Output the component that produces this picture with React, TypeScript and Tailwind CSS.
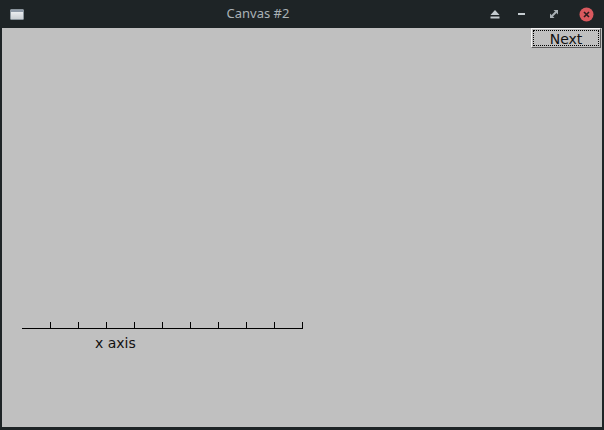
export default function App() {
    const ticks = [0, 28, 56, 84, 112, 140, 168, 196, 224, 252, 280]

    return (
        <div className="w-[604px] h-[430px] bg-[#1e2426] flex flex-col overflow-hidden">
            {/* title bar */}
            <div className="h-[28px] relative flex items-center shrink-0">
                <div className="ml-[10px] w-[14px] h-[11px] rounded-[1px] bg-gradient-to-b from-[#f4f6f8] to-[#c9ced3] border border-[#8a949c] relative">
                    <div className="h-[2px] bg-[#8f9aa8]" />
                </div>
                <div className="absolute left-0 right-0 top-0 h-[28px] flex items-center justify-center pointer-events-none">
                    <span
                        className="text-[13px] text-[#aab2b7] ml-[-88px]"
                        style={{ fontFamily: '"Noto Sans", "DejaVu Sans", sans-serif' }}
                    >
                        Canvas #2
                    </span>
                </div>
                <div className="ml-auto flex items-center h-full">
                    <svg width="12" height="12" viewBox="0 0 12 12" className="mr-[16px]">
                        <path d="M6 2 L10.5 7 L1.5 7 Z" fill="#c5ccd0" />
                        <rect x="1.5" y="8.5" width="9" height="2" fill="#c5ccd0" />
                    </svg>
                    <svg width="10" height="12" viewBox="0 0 10 12" className="mr-[22px]">
                        <rect x="1" y="5" width="7" height="2" fill="#c5ccd0" />
                    </svg>
                    <svg width="10" height="10" viewBox="0 0 10 10" className="mr-[20px]">
                        <path d="M4.5 1 L9 1 L9 5.5 Z" fill="#a9b1b5" />
                        <path d="M1 4.5 L1 9 L5.5 9 Z" fill="#a9b1b5" />
                        <path d="M3 7 L7 3" stroke="#a9b1b5" strokeWidth="2" />
                    </svg>
                    <svg width="15" height="15" viewBox="0 0 15 15" className="mr-[10px]">
                        <circle cx="7.5" cy="7.5" r="7" fill="#d9595e" />
                        <path d="M5 5 L10 10 M10 5 L5 10" stroke="#2a1c1e" strokeWidth="1.6" />
                    </svg>
                </div>
            </div>

            {/* canvas */}
            <div className="flex-1 ml-[2px] mr-[2px] mb-[3px] bg-[#c0c0c0] flex flex-col">
                <div className="flex justify-end mr-[1px]">
                    <button
                        className="w-[70px] h-[20px] bg-[#c0c0c0] border border-t-[#f4f4f4] border-l-[#f4f4f4] border-r-[#5a5a5a] border-b-[#5a5a5a] p-[1px]"
                        style={{ fontFamily: '"DejaVu Sans", sans-serif' }}
                    >
                        <div className="h-full w-full border border-dotted border-black flex items-center justify-center text-[14px] leading-none text-[#111] pt-[1px]">
                            Next
                        </div>
                    </button>
                </div>

                <svg width="284" height="8" viewBox="0 0 284 8" className="ml-[20px] mt-[274px]">
                    <rect x="0" y="6" width="281" height="1" fill="#000" />
                    {ticks.map((t) => (
                        <rect key={t} x={t + 28} y="0" width="1" height="6" fill="#000" />
                    ))}
                </svg>
                <div
                    className="ml-[93px] mt-[5px] text-[14px] leading-[17px] text-[#111]"
                    style={{ fontFamily: '"DejaVu Sans", sans-serif' }}
                >
                    x axis
                </div>
            </div>
        </div>
    )
}
